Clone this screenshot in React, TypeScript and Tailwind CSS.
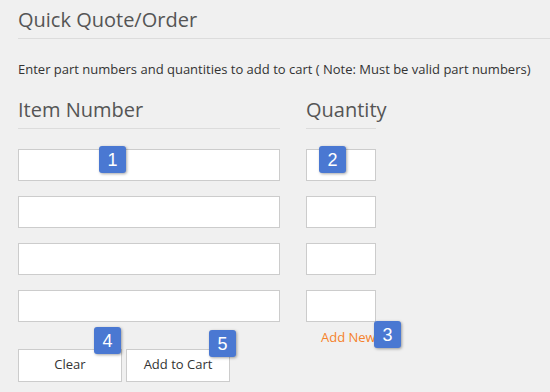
const rows = [0, 1, 2, 3];

function Badge({ n, className }: { n: number; className: string }) {
  return (
    <span
      className={`absolute flex h-[27px] w-[27px] items-center justify-center rounded-[3px] bg-[#4a78d2] text-[18px] leading-none text-white shadow-[1px_1px_3px_rgba(0,0,0,0.35)] [font-family:'Liberation_Sans',Arial,sans-serif] ${className}`}
    >
      {n}
    </span>
  );
}

export default function App() {
  return (
    <div className="relative h-[392px] w-[550px] overflow-hidden bg-[#f0f0f0] pl-[18px] text-[#333] [font-family:'Open_Sans',sans-serif]">
      <h1 className="border-b border-[#dcdcdc] pt-[6px] pb-[5px] text-[20px] leading-[27px] text-[#555]">
        Quick Quote/Order
      </h1>
      <p className="mt-[21px] text-[13px] leading-[18px]">
        Enter part numbers and quantities to add to cart ( Note: Must be valid part numbers)
      </p>

      <div className="mt-[18px] flex">
        <div className="w-[262px]">
          <h2 className="border-b border-[#dcdcdc] pb-[5px] text-[20px] leading-[27px] text-[#555]">Item Number</h2>
          <div className="mt-[20px] flex flex-col gap-[15px]">
            {rows.map((r) => (
              <input key={r} className="h-[32px] w-[262px] border border-[#ccc] bg-white" />
            ))}
          </div>
        </div>
        <div className="ml-[26px] w-[70px]">
          <h2 className="border-b border-[#dcdcdc] pb-[5px] text-[20px] leading-[27px] text-[#555]">Quantity</h2>
          <div className="mt-[20px] flex flex-col gap-[15px]">
            {rows.map((r) => (
              <input key={r} className="h-[32px] w-[70px] border border-[#ccc] bg-white" />
            ))}
          </div>
          <a className="mt-[6px] block whitespace-nowrap pl-[15px] text-[13px] text-[#f5822a]">Add New</a>
        </div>
      </div>

      <div className="mt-[1px] flex gap-[4px]">
        <button className="h-[33px] w-[104px] border border-[#ccc] bg-white text-[13px] text-[#333]">Clear</button>
        <button className="h-[33px] w-[104px] border border-[#ccc] bg-white text-[13px] text-[#333]">Add to Cart</button>
      </div>

      <Badge n={1} className="left-[99px] top-[146px]" />
      <Badge n={2} className="left-[319px] top-[146px]" />
      <Badge n={3} className="left-[374px] top-[321px]" />
      <Badge n={4} className="left-[94px] top-[327px]" />
      <Badge n={5} className="left-[209px] top-[330px]" />
    </div>
  );
}
